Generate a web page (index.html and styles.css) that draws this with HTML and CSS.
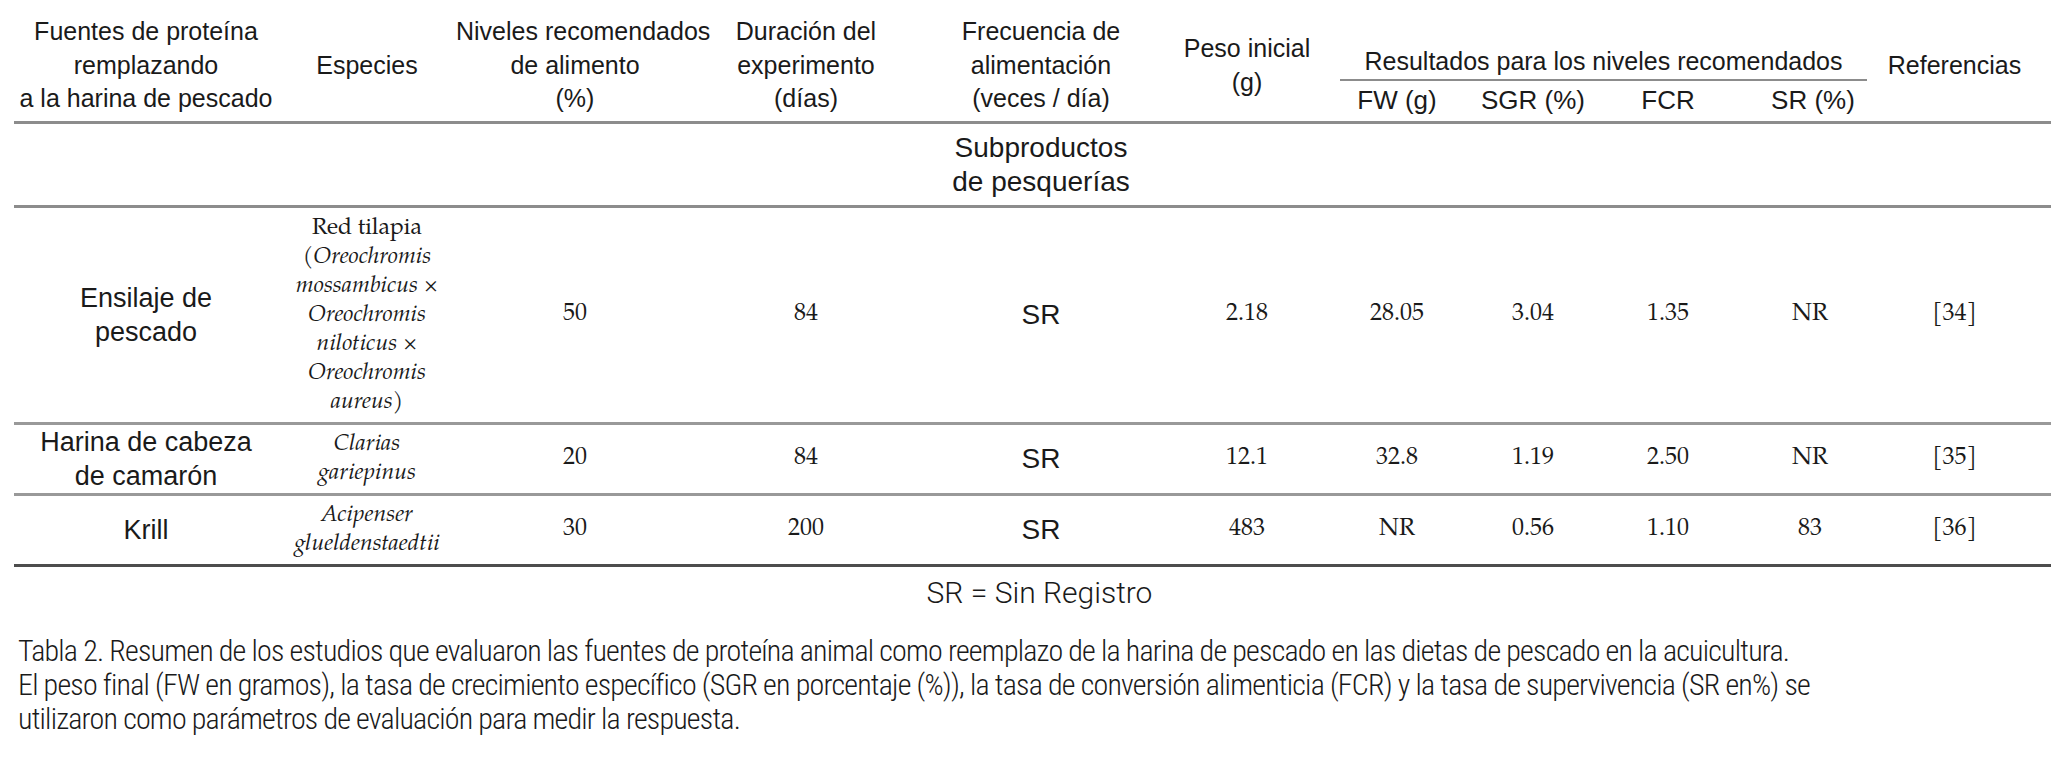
FILE: index.html
```html
<!DOCTYPE html>
<html lang="es">
<head>
<meta charset="utf-8">
<title>Tabla 2</title>
<link rel="stylesheet" href="styles.css">
</head>
<body>
<main class="page">
  <table class="data">
    <colgroup>
      <col class="w1"><col class="w2"><col class="w3"><col class="w4"><col class="w5"><col class="w6">
      <col class="w7"><col class="w8"><col class="w9"><col class="w10"><col class="w11">
    </colgroup>
    <thead>
      <tr class="head-top">
        <th rowspan="2">Fuentes de proteína<br>remplazando<br>a la harina de pescado</th>
        <th rowspan="2">Especies</th>
        <th rowspan="2">Niveles recomendados<br>de alimento<br>(%)</th>
        <th rowspan="2">Duración del<br>experimento<br>(días)</th>
        <th rowspan="2">Frecuencia de<br>alimentación<br>(veces / día)</th>
        <th rowspan="2">Peso inicial<br>(g)</th>
        <th colspan="4" class="group"><div class="group-label">Resultados para los niveles recomendados</div></th>
        <th rowspan="2" class="ref">Referencias</th>
      </tr>
      <tr class="head-sub">
        <th>FW (g)</th>
        <th>SGR (%)</th>
        <th>FCR</th>
        <th class="srh">SR (%)</th>
      </tr>
    </thead>
    <tbody>
      <tr class="section">
        <td></td><td></td><td></td><td></td>
        <td class="section-label">Subproductos<br>de pesquerías</td>
        <td></td><td></td><td></td><td></td><td></td><td></td>
      </tr>
      <tr class="row-tall">
        <td class="src">Ensilaje de<br>pescado</td>
        <td class="sp">Red tilapia<br>(<i>Oreochromis</i><br><i>mossambicus</i> ×<br><i>Oreochromis</i><br><i>niloticus</i> ×<br><i>Oreochromis</i><br><i>aureus</i>)</td>
        <td class="num">50</td>
        <td class="num">84</td>
        <td class="sr">SR</td>
        <td class="num">2.18</td>
        <td class="num">28.05</td>
        <td class="num">3.04</td>
        <td class="num">1.35</td>
        <td class="num srv">NR</td>
        <td class="num ref">[34]</td>
      </tr>
      <tr class="row-short">
        <td class="src">Harina de cabeza<br>de camarón</td>
        <td class="sp"><i>Clarias</i><br><i>gariepinus</i></td>
        <td class="num">20</td>
        <td class="num">84</td>
        <td class="sr">SR</td>
        <td class="num">12.1</td>
        <td class="num">32.8</td>
        <td class="num">1.19</td>
        <td class="num">2.50</td>
        <td class="num srv">NR</td>
        <td class="num ref">[35]</td>
      </tr>
      <tr class="row-short last">
        <td class="src">Krill</td>
        <td class="sp"><i>Acipenser</i><br><i>glueldenstaedtii</i></td>
        <td class="num">30</td>
        <td class="num">200</td>
        <td class="sr">SR</td>
        <td class="num">483</td>
        <td class="num">NR</td>
        <td class="num">0.56</td>
        <td class="num">1.10</td>
        <td class="num srv">83</td>
        <td class="num ref">[36]</td>
      </tr>
    </tbody>
  </table>
  <p class="note">SR = Sin Registro</p>
  <p class="caption">Tabla 2. Resumen de los estudios que evaluaron las fuentes de proteína animal como reemplazo de la harina de pescado en las dietas de pescado en la acuicultura.<br>El peso final (FW en gramos), la tasa de crecimiento específico (SGR en porcentaje (%)), la tasa de conversión alimenticia (FCR) y la tasa de supervivencia (SR en%) se<br>utilizaron como parámetros de evaluación para medir la respuesta.</p>
</main>
</body>
</html>
```

FILE: styles.css
```css
html, body {
  margin: 0;
  padding: 0;
  background: #ffffff;
}

body {
  color: #1a1a1a;
  font-family: "Liberation Sans", Arial, sans-serif;
}

.page {
  padding: 0 16px 0 14px;
}

.data {
  width: 100%;
  table-layout: fixed;
  border-collapse: collapse;
}

.w1 { width: 264px; }
.w2 { width: 178px; }
.w3 { width: 238px; }
.w4 { width: 224px; }
.w5 { width: 246px; }
.w6 { width: 166px; }
.w7 { width: 134px; }
.w8 { width: 138px; }
.w9 { width: 132px; }
.w10 { width: 152px; }
.w11 { width: 165px; }

.data th {
  font-family: "Liberation Sans", Arial, sans-serif;
  font-weight: normal;
  font-size: 25px;
  line-height: 33.5px;
  padding: 10px 0 0;
  text-align: center;
  vertical-align: middle;
  white-space: nowrap;
}

.data thead {
  border-bottom: 3px solid #8c8c8c;
}

.data th.group {
  height: 81px;
  padding: 0;
  vertical-align: bottom;
}

.group-label {
  margin: 0 19px 0 10px;
  padding-bottom: 1px;
  border-bottom: 2px solid #8c8c8c;
  line-height: 33px;
}

.head-sub th {
  height: 40px;
  padding: 0;
  font-size: 26px;
}

.data th.ref,
.data td.ref {
  padding-right: 28px;
}

.data th.srh {
  padding-left: 6px;
}

.data td {
  padding: 0;
  text-align: center;
  vertical-align: middle;
}

.section td {
  height: 81px;
  border-bottom: 3px solid #8c8c8c;
}

.section-label {
  font-size: 28px;
  line-height: 34px;
  white-space: nowrap;
}

.row-tall td {
  height: 214px;
  border-bottom: 3px solid #999999;
}

.row-short td {
  height: 68px;
  border-bottom: 3px solid #999999;
}

.row-short.last td {
  border-bottom: 3px solid #4d4d4d;
}

.src {
  font-size: 27px;
  line-height: 34px;
}

.sp {
  font-family: "Palatino Linotype", "Book Antiqua", Palatino, "URW Palladio L", "P052", "TeX Gyre Pagella", "Liberation Serif", serif;
  font-size: 23px;
  line-height: 29px;
}

.num {
  font-family: "Palatino Linotype", "Book Antiqua", Palatino, "URW Palladio L", "P052", "TeX Gyre Pagella", "Liberation Serif", serif;
  font-size: 24px;
}

.srv {
  padding-right: 4px;
}

.sr {
  font-size: 28px;
}

.note {
  margin: 8px 0 0;
  font-family: "Roboto", "Liberation Sans", sans-serif;
  font-stretch: 90%;
  font-weight: 350;
  font-size: 30px;
  line-height: 36px;
  text-align: center;
  padding-left: 14px;
}

.caption {
  margin: 23px 0 0;
  padding-left: 4px;
  font-family: "Roboto", "Liberation Sans", sans-serif;
  font-stretch: 75%;
  font-weight: 350;
  font-size: 30px;
  letter-spacing: -0.8px;
  line-height: 34px;
  white-space: nowrap;
}
```
